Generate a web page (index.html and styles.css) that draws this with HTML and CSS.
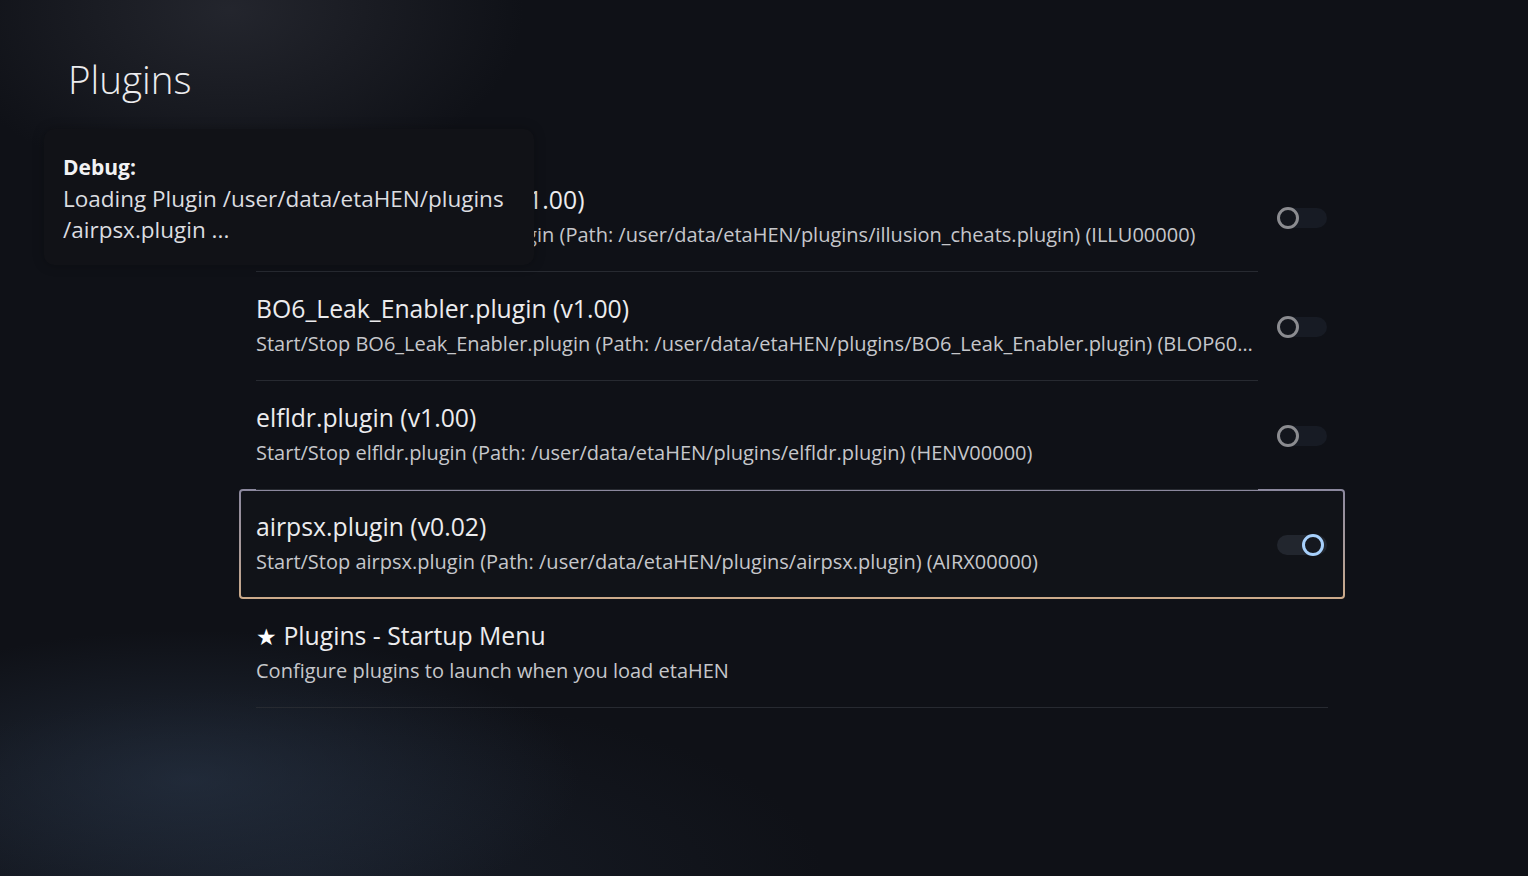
FILE: index.html
```html
<!DOCTYPE html>
<html lang="en">
<head>
<meta charset="utf-8">
<title>Plugins</title>
<link rel="stylesheet" href="styles.css">
</head>
<body>
<div class="screen">
  <h1 class="page-title">Plugins</h1>

  <div class="list">
    <div class="row">
      <div class="text">
        <div class="name">illusion_cheats.plugin (v1.00)</div>
        <div class="desc">Start/Stop illusion_cheats.plugin (Path: /user/data/etaHEN/plugins/illusion_cheats.plugin) (ILLU00000)</div>
      </div>
      <div class="toggle-cell"><span class="toggle"><span class="knob"></span></span></div>
    </div>
    <div class="row">
      <div class="text">
        <div class="name">BO6_Leak_Enabler.plugin (v1.00)</div>
        <div class="desc">Start/Stop BO6_Leak_Enabler.plugin (Path: /user/data/etaHEN/plugins/BO6_Leak_Enabler.plugin) (BLOP60000)</div>
      </div>
      <div class="toggle-cell"><span class="toggle"><span class="knob"></span></span></div>
    </div>
    <div class="row">
      <div class="text">
        <div class="name">elfldr.plugin (v1.00)</div>
        <div class="desc">Start/Stop elfldr.plugin (Path: /user/data/etaHEN/plugins/elfldr.plugin) (HENV00000)</div>
      </div>
      <div class="toggle-cell"><span class="toggle"><span class="knob"></span></span></div>
    </div>
    <div class="row selected">
      <div class="text">
        <div class="name">airpsx.plugin (v0.02)</div>
        <div class="desc">Start/Stop airpsx.plugin (Path: /user/data/etaHEN/plugins/airpsx.plugin) (AIRX00000)</div>
      </div>
      <div class="toggle-cell"><span class="toggle on"><span class="knob"></span></span></div>
    </div>
    <div class="row">
      <div class="text">
        <div class="name"><span class="star">★</span> Plugins - Startup Menu</div>
        <div class="desc">Configure plugins to launch when you load etaHEN</div>
      </div>
    </div>
  </div>

  <div class="debug">
    <div class="debug-head">Debug:</div>
    <div class="debug-body">Loading Plugin /user/data/etaHEN/plugins<br>/airpsx.plugin ...</div>
  </div>
</div>
</body>
</html>
```

FILE: styles.css
```css
html, body {
  margin: 0;
  padding: 0;
}

body {
  width: 1528px;
  height: 876px;
  overflow: hidden;
  background: #0f1117;
  font-family: "Open Sans", "Noto Sans", sans-serif;
  color: #e6e6e8;
}

.screen {
  position: relative;
  width: 1528px;
  height: 876px;
  box-sizing: border-box;
  padding: 56px 0 0 0;
  background:
    radial-gradient(ellipse 420px 260px at 230px 10px, rgba(60, 62, 72, 0.45), rgba(60, 62, 72, 0) 70%),
    radial-gradient(ellipse 520px 200px at 190px 780px, rgba(44, 58, 78, 0.55), rgba(44, 58, 78, 0) 75%),
    radial-gradient(ellipse 700px 250px at 300px 876px, rgba(34, 44, 60, 0.45), rgba(34, 44, 60, 0) 75%),
    #0f1117;
}

.page-title {
  margin: 0 0 0 68px;
  font-size: 38.5px;
  font-weight: 300;
  line-height: 46px;
  color: #ececee;
  letter-spacing: 0;
}

.list {
  margin: 61px 0 0 256px;
  width: 1072px;
}

.row {
  position: relative;
  display: flex;
  height: 109px;
}

.text {
  flex: 1;
  min-width: 0;
  box-sizing: border-box;
  padding-top: 21px;
  border-bottom: 1px solid #272a31;
  position: relative;
  z-index: 1;
}

.name {
  font-size: 24.75px;
  line-height: 32px;
  color: #ececee;
  white-space: nowrap;
}

.desc {
  margin-top: 5px;
  font-size: 20px;
  line-height: 28px;
  color: #c6c7cb;
  white-space: nowrap;
  overflow: hidden;
  text-overflow: ellipsis;
}

.star {
  font-size: 23px;
  color: #ffffff;
}

.toggle-cell {
  width: 70px;
  flex: none;
  display: flex;
  align-items: center;
  padding-left: 19px;
  box-sizing: border-box;
  position: relative;
  z-index: 1;
}

.toggle {
  position: relative;
  display: block;
  width: 50px;
  height: 20px;
  border-radius: 10px;
  background: #171b24;
}

.knob {
  position: absolute;
  top: 50%;
  left: 0;
  width: 16px;
  height: 16px;
  margin-top: -11px;
  border-radius: 50%;
  border: 3px solid #8b8c90;
  background: #13161d;
}

.toggle.on {
  background: #22262e;
}

.toggle.on .knob {
  left: auto;
  right: 3px;
  border-color: #a7d0fb;
  background: #15181f;
}

.row.selected::before {
  content: "";
  position: absolute;
  top: -1px;
  bottom: 0;
  left: -17px;
  right: -17px;
  border-radius: 4px;
  border: 2px solid transparent;
  background:
    linear-gradient(#111318, #111318) padding-box,
    linear-gradient(180deg, #8b889e 0%, #a89a9a 55%, #cdab8a 100%) border-box;
  z-index: 0;
}

.row.selected .text {
  border-bottom-color: transparent;
}

.debug {
  position: absolute;
  left: 44px;
  top: 129px;
  width: 490px;
  height: 136px;
  box-sizing: border-box;
  padding: 22px 19px 0 19px;
  border-radius: 10px;
  background: #111217;
  box-shadow: 0 0 12px rgba(0, 0, 0, 0.25);
  z-index: 5;
}

.debug-head {
  font-size: 21px;
  font-weight: 700;
  line-height: 32px;
  color: #f2f2f4;
}

.debug-body {
  font-size: 22.5px;
  line-height: 31px;
  color: #dcdde0;
}
```
